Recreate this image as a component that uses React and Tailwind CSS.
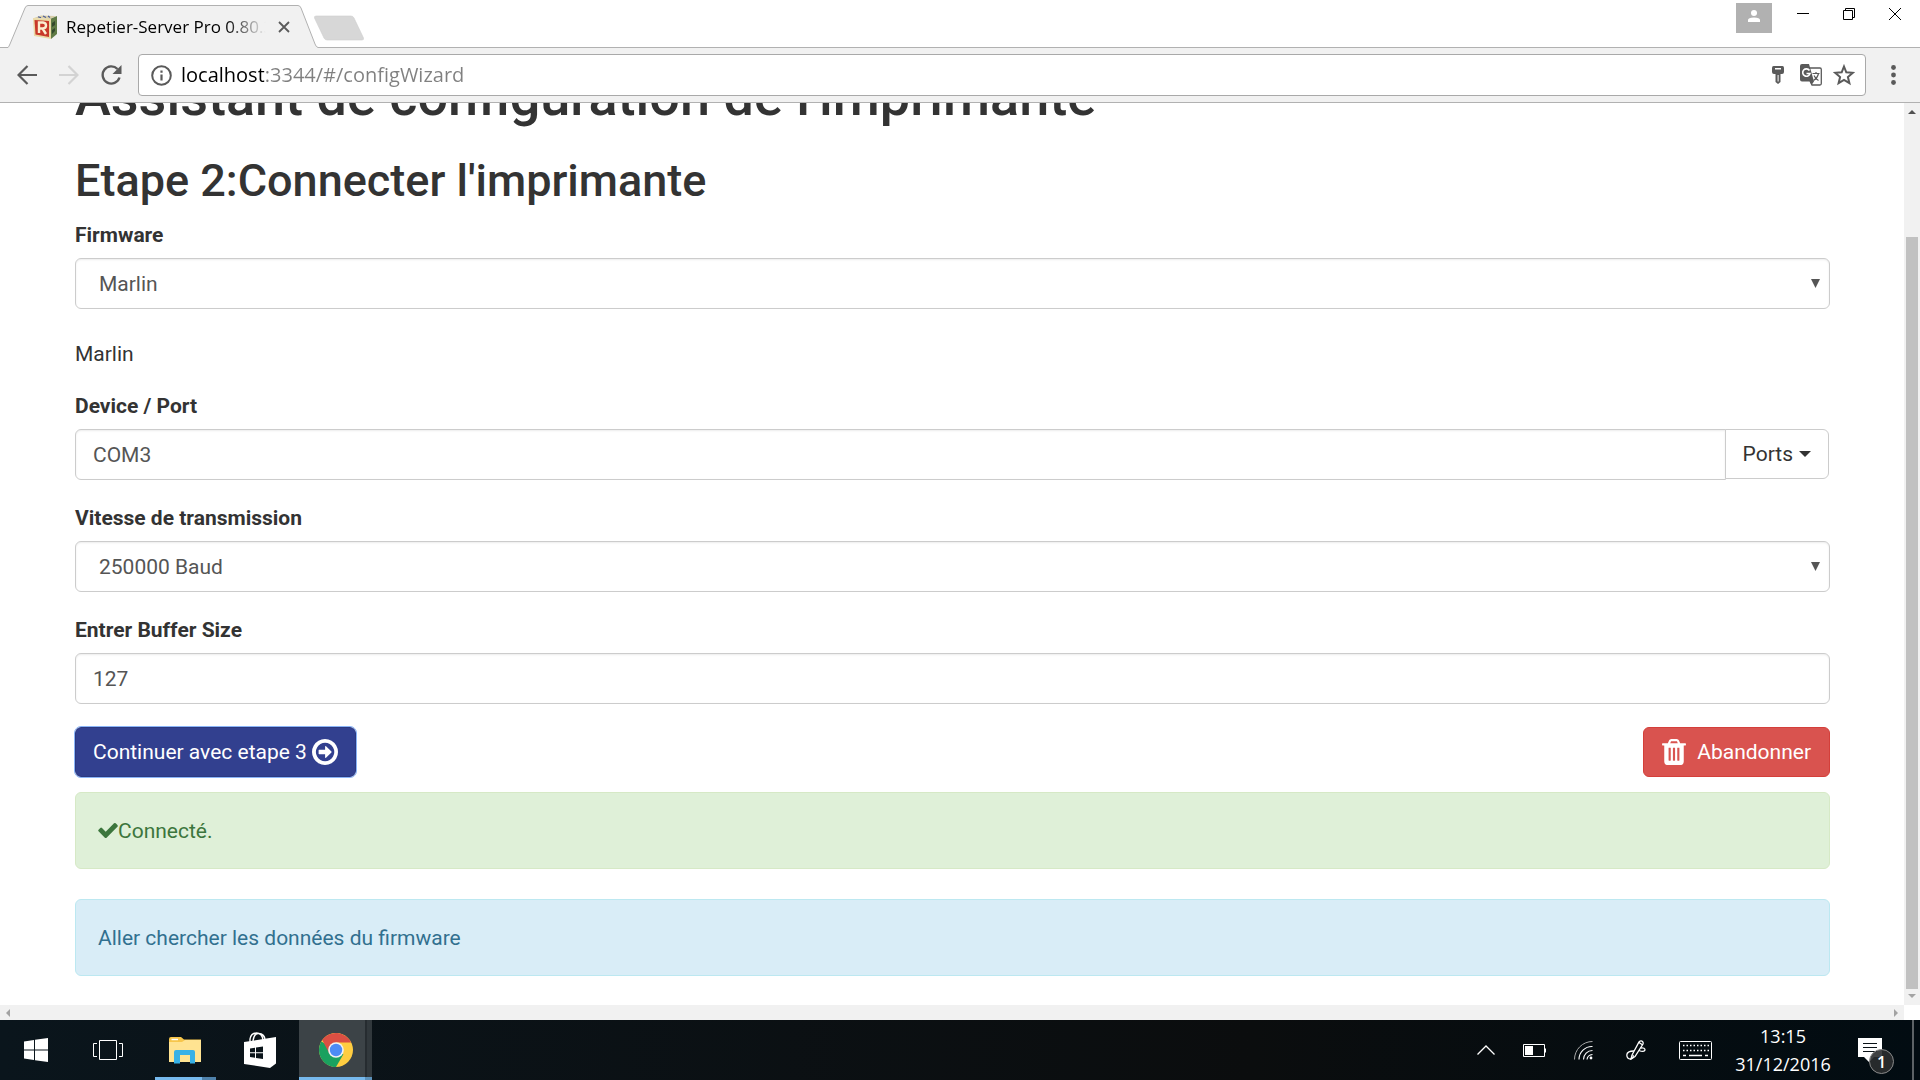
import { useState } from 'react'

const FIELD = 'block w-full h-[51px] rounded-md border border-[#ccc] bg-white text-[#555] text-[21px] leading-[30px] shadow-[inset_0_1px_2px_rgba(0,0,0,0.075)] outline-none'

function Field({ id, label, children }) {
  return (
    <div className="mb-[23px]">
      <label htmlFor={id} className="block w-fit mb-2 font-bold">{label}</label>
      {children}
    </div>
  )
}

function Select({ id, value }) {
  return (
    <div className="relative">
      <select id={id} defaultValue={value} className={`${FIELD} appearance-none pl-[23px] pr-10`}>
        <option>{value}</option>
      </select>
      <svg className="absolute right-[10px] top-[21px] pointer-events-none" width="9" height="9" viewBox="0 0 9 9">
        <path d="M0 0h9L4.500 9z" fill="#555" />
      </svg>
    </div>
  )
}

function TabStrip() {
  return (
    <header className="flex h-12 items-end border-b border-[#b1b1b1] bg-white pl-2">
      <div className="flex h-[43px] -mb-px">
        <svg width="20" height="43" viewBox="0 0 20 43">
          <path d="M0 42.500Q1 41.500 2 39L17 3Q18 .5 20 .5V43H0z" fill="#f1f1f1" />
          <path d="M0 42.500Q1 41.500 2 39L17 3Q18 .5 20 .5" fill="none" stroke="#b1b1b1" />
        </svg>
        <div className="flex w-[270px] items-center border-t border-[#b1b1b1] bg-[#f1f1f1] pl-[5px]">
          <Favicon />
          <span className="ml-[9px] w-[200px] overflow-hidden whitespace-nowrap text-[17px] leading-6 text-black [mask-image:linear-gradient(to_right,#000_80%,transparent)]">
            Repetier-Server Pro 0.80.3
          </span>
          <button type="button" aria-label="Fermer l'onglet" className="ml-[12px]">
            <svg width="12" height="12" viewBox="0 0 12 12" stroke="#5a5a5a" strokeWidth="1.800">
              <path d="M1 1l10 10M11 1L1 11" />
            </svg>
          </button>
        </div>
        <svg width="20" height="43" viewBox="0 0 20 43">
          <path d="M0 .5Q2 .5 3 3L17 39Q18 42 20 42.500V43H0z" fill="#f1f1f1" />
          <path d="M0 .5Q2 .5 3 3L17 39Q18 42 20 42.500" fill="none" stroke="#b1b1b1" />
        </svg>
      </div>
      <button type="button" aria-label="Nouvel onglet" className="-ml-1 mb-[6px]">
        <svg width="50" height="26" viewBox="0 0 50 26">
          <path d="M2 1H37Q39 1 40 3L49.500 23Q50 25 48 25H13Q11 25 10 23L.5 3Q0 1 2 1z" fill="#d7d7d7" stroke="#cfcfcf" strokeWidth=".6" />
        </svg>
      </button>
      <div className="ml-auto flex self-start pr-[2px]">
        <button type="button" aria-label="Profil" className="mt-[3px] mr-2 grid h-[30px] w-9 place-items-center bg-[#b1b1b1]">
          <svg width="12" height="12" viewBox="0 0 12 12" fill="#fff" className="-mt-1">
            <circle cx="6" cy="3" r="3" />
            <path d="M0 12V10Q0 7.500 6 7.500T12 10V12z" />
          </svg>
        </button>
        <button type="button" aria-label="Réduire" className="grid h-7 w-[46px] place-items-center">
          <svg width="12" height="12" viewBox="0 0 12 12"><path d="M0 5.500h12" stroke="#000" /></svg>
        </button>
        <button type="button" aria-label="Restaurer" className="grid h-7 w-[46px] place-items-center">
          <svg width="12" height="12" viewBox="0 0 12 12" fill="none" stroke="#000">
            <path d="M.5 2.500h9v9h-9zM2.500 2.500V.5h9v9h-2" />
          </svg>
        </button>
        <button type="button" aria-label="Fermer" className="grid h-7 w-[46px] place-items-center">
          <svg width="12" height="12" viewBox="0 0 12 12" stroke="#000"><path d="M0 0l12 12M12 0L0 12" /></svg>
        </button>
      </div>
    </header>
  )
}

// toy block with the red letter on its front face
function Favicon() {
  return (
    <svg width="24" height="24" viewBox="0 0 24 24">
      <path d="M1 3L8 .5 23 1 17 4z" fill="#d9cfa8" />
      <path d="M5 1.800l3 1M10 1l3 1.500M15 1l2 1.500" stroke="#4a5c9c" strokeWidth="1.200" />
      <path d="M17 4L24 1V19L18 24z" fill="#5f7a45" />
      <path d="M19 8l3-2v4l-3 2zM19 15l3-2v3l-3 3z" fill="#34482c" />
      <path d="M0 3L18 4V24L1 21z" fill="#ead9a5" />
      <path d="M1.500 5L16 6V22L2.500 19.500z" fill="#c8382a" />
      <path d="M6 18V7.500H10Q13 7.800 13 10.500T10 13.500H6M9.500 13.500L13 19" fill="none" stroke="#fbeed0" strokeWidth="2.400" />
    </svg>
  )
}

function Toolbar() {
  const [url, setUrl] = useState('localhost:3344/#/configWizard')
  return (
    <nav className="flex h-[55px] items-center border-b border-[#b1b1b1] bg-[#f1f1f1] pl-[17px] pr-[24px]">
      <button type="button" aria-label="Précédent">
        <svg width="20" height="20" viewBox="0 0 20 20" fill="none" stroke="#5a5a5a" strokeWidth="2.200">
          <path d="M20 10H2M10.500 1L1.500 10l9 9" />
        </svg>
      </button>
      <button type="button" aria-label="Suivant" className="ml-[22px]">
        <svg width="20" height="20" viewBox="0 0 20 20" fill="none" stroke="#d3d3d3" strokeWidth="2.200">
          <path d="M0 10H18M9.500 1l9 9-9 9" />
        </svg>
      </button>
      <button type="button" aria-label="Actualiser" className="ml-[22px]">
        <svg width="21" height="20" viewBox="0 0 21 20">
          <path d="M16.500 4A8.600 8.600 0 1 0 18.500 12.500" fill="none" stroke="#5a5a5a" strokeWidth="2.400" />
          <path d="M20.500 0V9H11.500z" fill="#5a5a5a" />
        </svg>
      </button>
      <div className="ml-4 flex h-[42px] flex-1 items-center rounded border border-[#a9a9a9] bg-white pl-3 pr-[10px]">
        <svg width="21" height="21" viewBox="0 0 21 21" fill="none" stroke="#5a5a5a">
          <circle cx="10.500" cy="10.500" r="9.300" strokeWidth="2" />
          <path d="M10.500 9.500V15.500M10.500 5.500V7.700" strokeWidth="2.200" />
        </svg>
        <input
          aria-label="Adresse"
          value={url}
          onChange={e => setUrl(e.target.value)}
          className="ml-[9px] flex-1 bg-linear-to-r from-black from-[83px] to-[#808080] to-[83px] bg-clip-text text-[20px] leading-7 text-transparent outline-none"
        />
        <svg width="12" height="18" viewBox="0 0 12 18">
          <path fillRule="evenodd" d="M1.500 0H10.500Q12 0 12 2V6Q12 8 10 8H8.500V16L6 18 3.500 16V8H2Q0 8 0 6V2Q0 0 1.500 0zM3 2V3.600H9V2zM5.600 9V15.500H6.600V9z" fill="#5a5a5a" />
        </svg>
        <svg width="22" height="22" viewBox="0 0 22 22" className="ml-4">
          <path d="M9 4H20Q21.300 4 21.300 5.500V19.500Q21.300 21 20 21H12L10 17" fill="#fff" stroke="#5a5a5a" strokeWidth="1.300" />
          <path d="M2 0H9L14 17.500H2Q0 17.500 0 15.500V2Q0 0 2 0zM10 17.500H14L11.500 21z" fill="#5a5a5a" />
          <path d="M9.500 6.500A3.700 3.700 0 1 0 10 9.500H6.500" fill="none" stroke="#fff" strokeWidth="1.600" />
          <path d="M12.500 9.500H19.500M16 8V9.500M18.500 9.500Q17.500 14 13.500 16.500M14 11.500Q15.500 15 18.500 16.500" fill="none" stroke="#5a5a5a" strokeWidth="1.200" />
        </svg>
        <svg width="22" height="22" viewBox="0 0 22 22" className="ml-[11px]">
          <path d="M11 2.500L13.300 8.300 19.800 8.800 14.900 13 16.400 19.200 11 15.900 5.600 19.200 7.100 13 2.200 8.800 8.700 8.300z" fill="none" stroke="#5a5a5a" strokeWidth="2" />
        </svg>
      </div>
      <button type="button" aria-label="Menu" className="ml-[25px]">
        <svg width="5" height="20" viewBox="0 0 5 20" fill="#5a5a5a">
          <circle cx="2.500" cy="2.500" r="2.400" />
          <circle cx="2.500" cy="10" r="2.400" />
          <circle cx="2.500" cy="17.500" r="2.400" />
        </svg>
      </button>
    </nav>
  )
}

function Wizard() {
  const [port, setPort] = useState('COM3')
  const [buffer, setBuffer] = useState('127')

  return (
    <main className="min-w-0 flex-1 overflow-hidden bg-white pl-[75px] pr-[74px] font-['Roboto',sans-serif] text-[21px] leading-[30px] text-[#333]">
      <h1 className="-mt-9 text-[54px] leading-[59px] font-medium">Assistant de configuration de l'imprimante</h1>
      <h2 className="mt-[30px] mb-[14px] text-[45px] leading-[50px] font-medium">Etape 2:Connecter l'imprimante</h2>

      <div className="mb-[30px]">
        <label htmlFor="firmware" className="mb-2 block w-fit font-bold">Firmware</label>
        <Select id="firmware" value="Marlin" />
      </div>
      <p className="mb-[22px]">Marlin</p>

      <Field id="port" label="Device / Port">
        <div className="flex items-start pr-px">
          <input id="port" value={port} onChange={e => setPort(e.target.value)} className={`${FIELD} min-w-0 flex-1 rounded-r-none px-[17px]`} />
          <button type="button" className="-ml-px flex h-[50px] items-center gap-[6px] rounded-r-md border border-[#ccc] bg-white px-[17px]">
            Ports
            <svg width="12" height="6" viewBox="0 0 12 6"><path d="M0 0h12L6 6z" fill="#333" /></svg>
          </button>
        </div>
      </Field>

      <Field id="baud" label="Vitesse de transmission">
        <Select id="baud" value="250000 Baud" />
      </Field>

      <Field id="buffer" label="Entrer Buffer Size">
        <input id="buffer" value={buffer} onChange={e => setBuffer(e.target.value)} className={`${FIELD} px-[17px]`} />
      </Field>

      <div className="flex justify-between text-white">
        <button type="button" className="flex h-[50px] items-center gap-[5px] rounded-md border border-[#2c3980] bg-[#32408f] px-[17px] outline outline-[#8ab4f8]">
          Continuer avec etape 3
          <svg width="26" height="26" viewBox="128 128 1536 1536" fill="currentColor">
            <path d="M1285 896q0 13-10 23l-319 319q-11 9-22 9-14 0-23-9t-9-23v-192h-352q-13 0-22.500-9.500t-9.500-22.500v-192q0-13 9.500-22.500t22.500-9.500h352v-192q0-14 9-23t23-9q12 0 24 10l319 319q9 9 9 23zm160 0q0-148-73-273t-198-198-273-73-273 73-198 198-73 273 73 273 198 198 273 73 273-73 198-198 73-273zm219 0q0 209-103 385.500t-279.500 279.500-385.500 103-385.500-103-279.500-279.500-103-385.500 103-385.500 279.500-279.500 385.500-103 385.500 103 279.500 279.500 103 385.500z" />
          </svg>
        </button>
        <button type="button" className="flex h-[50px] items-center gap-[11px] rounded-md border border-[#d43f3a] bg-[#d9534f] px-[18px]">
          <svg width="24" height="26" viewBox="192 128 1408 1536" fill="currentColor">
            <path d="M704 1376v-704q0-14-9-23t-23-9h-64q-14 0-23 9t-9 23v704q0 14 9 23t23 9h64q14 0 23-9t9-23zm256 0v-704q0-14-9-23t-23-9h-64q-14 0-23 9t-9 23v704q0 14 9 23t23 9h64q14 0 23-9t9-23zm256 0v-704q0-14-9-23t-23-9h-64q-14 0-23 9t-9 23v704q0 14 9 23t23 9h64q14 0 23-9t9-23zm-544-992h448l-48-117q-7-9-17-11h-317q-10 2-17 11zm928 32v64q0 14-9 23t-23 9h-96v948q0 83-47 143.500t-113 60.500h-832q-66 0-113-58.500t-47-141.500v-952h-96q-14 0-23-9t-9-23v-64q0-14 9-23t23-9h309l70-167q15-37 54-63t79-26h320q40 0 79 26t54 63l70 167h309q14 0 23 9t9 23z" />
          </svg>
          Abandonner
        </button>
      </div>

      <div className="mt-[15px] flex h-[77px] items-center rounded-md border border-[#d6e9c6] bg-[#dff0d8] px-[22px] text-[#3c763d]">
        <svg width="20" height="15" viewBox="121 334 1550 1188" fill="currentColor">
          <path d="M1671 566q0 40-28 68l-724 724-136 136q-28 28-68 28t-68-28l-136-136-362-362q-28-28-28-68t28-68l136-136q28-28 68-28t68 28l294 295 656-657q28-28 68-28t68 28l136 136q28 28 28 68z" />
        </svg>
        Connecté.
      </div>
      <div className="mt-[30px] flex h-[77px] items-center rounded-md border border-[#bce8f1] bg-[#d9edf7] px-[22px] text-[#31708f]">
        Aller chercher les données du firmware
      </div>
    </main>
  )
}

function Taskbar() {
  return (
    <footer className="flex h-[60px] shrink-0 bg-linear-to-r from-[#0a151c] via-[#0b0d0e] via-65% to-[#020c12] text-white">
      <button type="button" aria-label="Démarrer" className="grid w-[72px] place-items-center">
        <svg width="24" height="24" viewBox="0 0 24 24" fill="#fff">
          <path d="M0 3.400L10 2V11.400H0zM11 1.800L24 0V11.400H11zM0 12.400H10V22L0 20.600zM11 12.400H24V24L11 22.200z" />
        </svg>
      </button>
      <button type="button" aria-label="Vue des tâches" className="grid w-[72px] place-items-center">
        <svg width="30" height="20" viewBox="0 0 30 20" fill="none" stroke="#fff">
          <path d="M6.500 .5h17v19h-17zM4 3.500H.5v13H4M26 3.500h3.500v13H26" />
        </svg>
      </button>
      <button type="button" aria-label="Explorateur" className="relative ml-1 grid w-[74px] place-items-center">
        <svg width="32" height="27" viewBox="0 0 32 27">
          <path d="M0 2Q0 0 2 0H12L15 2.500H32V25H0z" fill="#f7c64b" />
          <path d="M0 5H13L16 3H32V25H0z" fill="#ffe391" />
          <path d="M2.500 2.500H9" stroke="#fff" strokeWidth="1.400" />
          <path d="M5 26.500V15Q5 13 7 13H24Q26 13 26 15V26.500H21V18H11V26.500z" fill="#38b1e6" />
        </svg>
        <span className="absolute bottom-0 left-[7px] h-[3px] w-[61px] border-r-[14px] border-[#4f82ab] bg-[#76b9ed]" />
      </button>
      <button type="button" aria-label="Store" className="grid w-[76px] place-items-center">
        <svg width="32" height="36" viewBox="0 0 32 36">
          <path d="M6 10V7Q7 1 12.500 1T19 8M9 9Q10 1 15 1.500T21 7" fill="none" stroke="#fff" strokeWidth="1.400" />
          <path d="M0 10L32 5V31.500L26 36 0 32z" fill="#fff" />
          <path d="M6 16.500L11 15.700V20.200H6zM12 15.500L19 14.500V20.200H12zM6 21.300H11V25.800L6 25zM12 21.300H19V27L12 26z" fill="#0b151b" />
        </svg>
      </button>
      <button type="button" aria-label="Chrome" className="relative ml-px grid w-[73px] place-items-center bg-[#3c4347]">
        <svg width="34" height="34" viewBox="0 0 34 34">
          <circle cx="17" cy="17" r="17" fill="#ffcd41" />
          <path d="M17 17L2.300 8.500A17 17 0 0 0 17 34L24.400 21.300z" fill="#1aa15f" />
          <path d="M17 9.500H32.200A17 17 0 0 0 3.200 7L10.500 20.800z" fill="#db4f43" />
          <circle cx="17" cy="17" r="7.800" fill="#f1f1f1" />
          <circle cx="17" cy="17" r="6.200" fill="#4c8bf5" />
        </svg>
        <span className="absolute inset-y-0 right-0 w-[7px] border-l-2 border-[#262c30] bg-[#31383c]" />
        <span className="absolute bottom-0 left-0 h-[3px] w-full border-r-[7px] border-[#5c92bb] bg-[#76b9ed]" />
      </button>

      <div className="ml-auto flex items-center">
        <svg width="18" height="10" viewBox="0 0 18 10" fill="none" stroke="#fff" strokeWidth="1.300"><path d="M.5 9.500L9 1l8.500 8.500" /></svg>
        <svg width="23" height="13" viewBox="0 0 23 13" className="ml-7">
          <path d="M.5 .5h21v12H.5z" fill="none" stroke="#fff" />
          <path d="M2 2h8v9H2zM22 4.500h1v4h-1z" fill="#fff" />
        </svg>
        <svg width="19" height="19" viewBox="0 0 19 19" fill="none" stroke="#fff" className="ml-7">
          <path d="M.5 18.500A18 18 0 0 1 18.500 .5" stroke="#aaa" />
          <path d="M5 18.500A13 13 0 0 1 18.500 5.500M9.500 18.500A9 9 0 0 1 18.500 9.500M13 18.500Q13.500 14 18.500 13.500" strokeWidth="1.100" />
          <circle cx="17" cy="17" r="1.400" fill="#fff" stroke="none" />
        </svg>
        <svg width="20" height="20" viewBox="0 0 20 20" fill="none" stroke="#fff" strokeWidth="1.300" className="ml-[33px]">
          <path d="M6 15L13 2Q15 0 16.500 1.500 17.500 2.500 17 4L9 16.500 5 19zM13 2.500l3 2" />
          <path d="M8 11Q1 11 .8 15 1 19 4.500 19 8 18.500 7 15M15 8Q19 7.500 19 10 18 12.500 13 10.500" />
        </svg>
        <svg width="33" height="19" viewBox="0 0 33 19" fill="none" stroke="#fff" className="ml-[33px]">
          <rect x=".5" y=".5" width="32" height="18" rx="1" />
          <path d="M4 4.500h26M4 9.500h26" strokeDasharray="1.500 2" strokeWidth="1.300" />
          <path d="M4 14.500h3M10 14.500h13M26 14.500h3" strokeWidth="1.300" />
        </svg>
        <div className="ml-[22px] w-[98px] text-center text-[18px] leading-7">
          <div>13:15</div>
          <div>31/12/2016</div>
        </div>
        <button type="button" aria-label="Notifications" className="relative ml-[26px] h-6 w-6">
          <svg width="24" height="24" viewBox="0 0 24 24">
            <path d="M0 0H24V19H16L11 24 6 19H0z" fill="#fff" />
            <path d="M5 5.500h14M5 9.500h14M5 13.500h14" stroke="#0a1217" />
          </svg>
          <span className="absolute top-[11px] left-[11px] grid h-[25px] w-[25px] place-items-center rounded-full border border-[#8a8a8a] bg-[#2b2d30]/90 text-[16px] leading-none font-semibold">1</span>
        </button>
        <div className="ml-[30px] h-[60px] w-2 border-l-2 border-[#5c6266]" />
      </div>
    </footer>
  )
}

export default function App() {
  return (
    <div className="flex h-screen flex-col overflow-hidden bg-white font-['Open_Sans','Noto_Sans',sans-serif]">
      <TabStrip />
      <Toolbar />
      <div className="flex min-h-0 flex-1">
        <Wizard />
        <div className="flex w-4 flex-col items-center bg-[#f1f1f1] py-[7px]">
          <svg width="8" height="4" viewBox="0 0 8 4"><path d="M0 4L4 0l4 4z" fill="#505050" /></svg>
          <div className="mt-[123px] mb-[5px] w-3 flex-1 bg-[#c1c1c1]" />
          <svg width="8" height="4" viewBox="0 0 8 4"><path d="M0 0L4 4l4-4z" fill="#a3a3a3" /></svg>
        </div>
      </div>
      <div className="mr-4 flex h-[15px] shrink-0 items-center justify-between bg-[#f1f1f1] px-[6px]">
        <svg width="4" height="8" viewBox="0 0 4 8"><path d="M4 0L0 4l4 4z" fill="#a3a3a3" /></svg>
        <svg width="4" height="8" viewBox="0 0 4 8"><path d="M0 0L4 4 0 8z" fill="#a3a3a3" /></svg>
      </div>
      <Taskbar />
    </div>
  )
}
